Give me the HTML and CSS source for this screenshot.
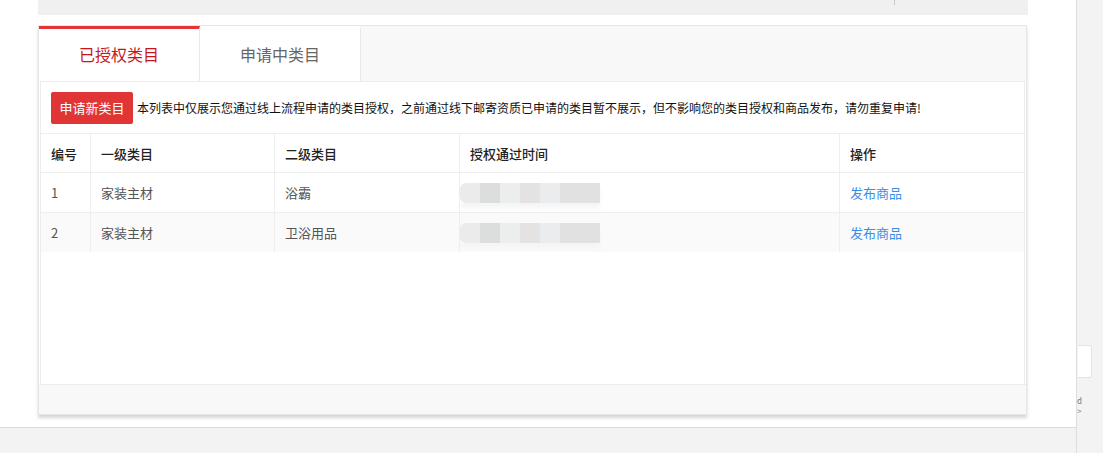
FILE: index.html
```html
<!DOCTYPE html>
<html lang="zh-CN">
<head>
    <meta charset="UTF-8" />
    <title>类目管理</title>
    <link rel="stylesheet" href="styles.css">
</head>
<body>
    <div class="page">
        <div class="main">
            <div class="top-bar"><span class="top-divider"></span></div>

            <div class="card">
                <div class="tabs">
                    <div class="tab active">已授权类目</div>
                    <div class="tab">申请中类目</div>
                </div>

                <div class="panel">
                    <div class="notice">
                        <a class="btn-apply">申请新类目</a>
                        <span class="notice-text">本列表中仅展示您通过线上流程申请的类目授权，之前通过线下邮寄资质已申请的类目暂不展示，但不影响您的类目授权和商品发布，请勿重复申请!</span>
                    </div>

                    <table class="cat-table">
                        <thead>
                            <tr>
                                <th class="col-no">编号</th>
                                <th class="col-first">一级类目</th>
                                <th class="col-second">二级类目</th>
                                <th class="col-time">授权通过时间</th>
                                <th class="col-op">操作</th>
                            </tr>
                        </thead>
                        <tbody>
                            <tr>
                                <td>1</td>
                                <td>家装主材</td>
                                <td>浴霸</td>
                                <td><div class="masked"><i></i><i></i><i></i><i></i><i></i><i class="wide"></i></div></td>
                                <td><a class="link">发布商品</a></td>
                            </tr>
                            <tr class="alt">
                                <td>2</td>
                                <td>家装主材</td>
                                <td>卫浴用品</td>
                                <td><div class="masked"><i></i><i></i><i></i><i></i><i></i><i class="wide"></i></div></td>
                                <td><a class="link">发布商品</a></td>
                            </tr>
                        </tbody>
                    </table>
                </div>

                <div class="card-footer"></div>
            </div>

            <div class="bottom-bar"></div>
        </div>

        <div class="side">
            <div class="side-box"></div>
            <div class="side-glyphs">d<br>&gt;</div>
        </div>
    </div>
</body>
</html>
```

FILE: styles.css
```css
body {
    margin: 0;
    background-color: #fff;
    font-family: "Noto Sans CJK SC", "Liberation Sans", sans-serif;
    color: #333;
    height: 453px;
    overflow: hidden;
}

.page {
    display: flex;
    height: 453px;
}

.main {
    width: 1076px;
    flex-shrink: 0;
    border-right: 1px solid #dedede;
    display: flex;
    flex-direction: column;
}

.top-bar {
    margin-left: 38px;
    width: 990px;
    height: 15px;
    background-color: #f0f0f0;
    position: relative;
}

.top-divider {
    position: absolute;
    left: 856px;
    top: 0;
    width: 1px;
    height: 5px;
    background-color: #c8c8c8;
}

.card {
    margin: 10px 0 0 38px;
    width: 987px;
    height: 388px;
    border: 1px solid #e6e6e6;
    background-color: #fff;
    box-shadow: 0 3px 3px rgba(0, 0, 0, 0.16);
    display: flex;
    flex-direction: column;
}

.tabs {
    display: flex;
    height: 55px;
    background-color: #f8f8f8;
    flex-shrink: 0;
}

.tab {
    width: 161px;
    height: 55px;
    box-sizing: border-box;
    background-color: #fff;
    border-right: 1px solid #e8e8e8;
    border-top: 3px solid transparent;
    display: flex;
    justify-content: center;
    align-items: center;
    font-size: 16px;
    color: #666;
    padding-bottom: 2px;
}

.tab.active {
    border-top-color: #e23535;
    color: #c8161d;
}

.panel {
    flex: 1;
    margin: 0 1px;
    border: 1px solid #ececec;
    border-bottom: none;
    background-color: #fff;
}

.notice {
    height: 52px;
    display: flex;
    align-items: center;
    padding-left: 10px;
    border-bottom: 1px solid #eeeeee;
    box-sizing: border-box;
}

.btn-apply {
    width: 82px;
    height: 32px;
    border-radius: 2px;
    background-color: #e03435;
    color: #fff;
    font-size: 13px;
    display: flex;
    justify-content: center;
    align-items: center;
    flex-shrink: 0;
    margin-right: 4px;
    cursor: pointer;
}

.notice-text {
    font-size: 12px;
    color: #111;
    white-space: nowrap;
}

.cat-table {
    width: 100%;
    border-collapse: collapse;
    font-size: 13px;
}

.cat-table th,
.cat-table td {
    text-align: left;
    padding: 0 0 0 10px;
    border-right: 1px solid #eeeeee;
    border-bottom: 1px solid #eeeeee;
}

.cat-table th:last-child,
.cat-table td:last-child {
    border-right: none;
}

.cat-table th {
    height: 38px;
    font-weight: 500;
    color: #222;
}

.cat-table td {
    height: 39px;
    color: #555;
}

.cat-table tr.alt td {
    background-color: #fafafa;
    border-bottom: none;
}

.col-no { width: 39px; }
.col-first { width: 173px; }
.col-second { width: 174px; }
.col-time { width: 369px; }

.masked {
    display: flex;
    width: 140px;
    height: 20px;
    margin: 1px 0 0 -10px;
    box-shadow: 0 5px 5px #f5f5f5;
}

.masked i {
    width: 20px;
    height: 20px;
    background-color: #e8e8e8;
}

.masked i:nth-child(1) { background-color: #ebebeb; border-radius: 6px 0 0 6px; }
.masked i:nth-child(2) { background-color: #dcdedd; }
.masked i:nth-child(3) { background-color: #eceeed; }
.masked i:nth-child(4) { background-color: #e4e3e1; }
.masked i:nth-child(5) { background-color: #eaecee; }
.masked i.wide { width: 40px; background-color: #e1e1e1; }

.link {
    color: #3b8ee8;
    cursor: pointer;
}

.card-footer {
    height: 29px;
    flex-shrink: 0;
    background-color: #f8f8f8;
    border-top: 1px solid #ececec;
}

.bottom-bar {
    margin-top: 12px;
    flex: 1;
    background-color: #f3f3f3;
    border-top: 1px solid #dcdcdc;
}

.side {
    flex: 1;
    background-color: #f3f3f3;
    position: relative;
}

.side-box {
    position: absolute;
    left: 1px;
    top: 345px;
    width: 13px;
    height: 31px;
    background-color: #fff;
    border: 1px solid #e4e4e4;
    border-left: none;
    border-radius: 0 3px 3px 0;
}

.side-glyphs {
    position: absolute;
    left: 0;
    top: 396px;
    font-size: 8px;
    line-height: 10px;
    color: #777;
}
```
